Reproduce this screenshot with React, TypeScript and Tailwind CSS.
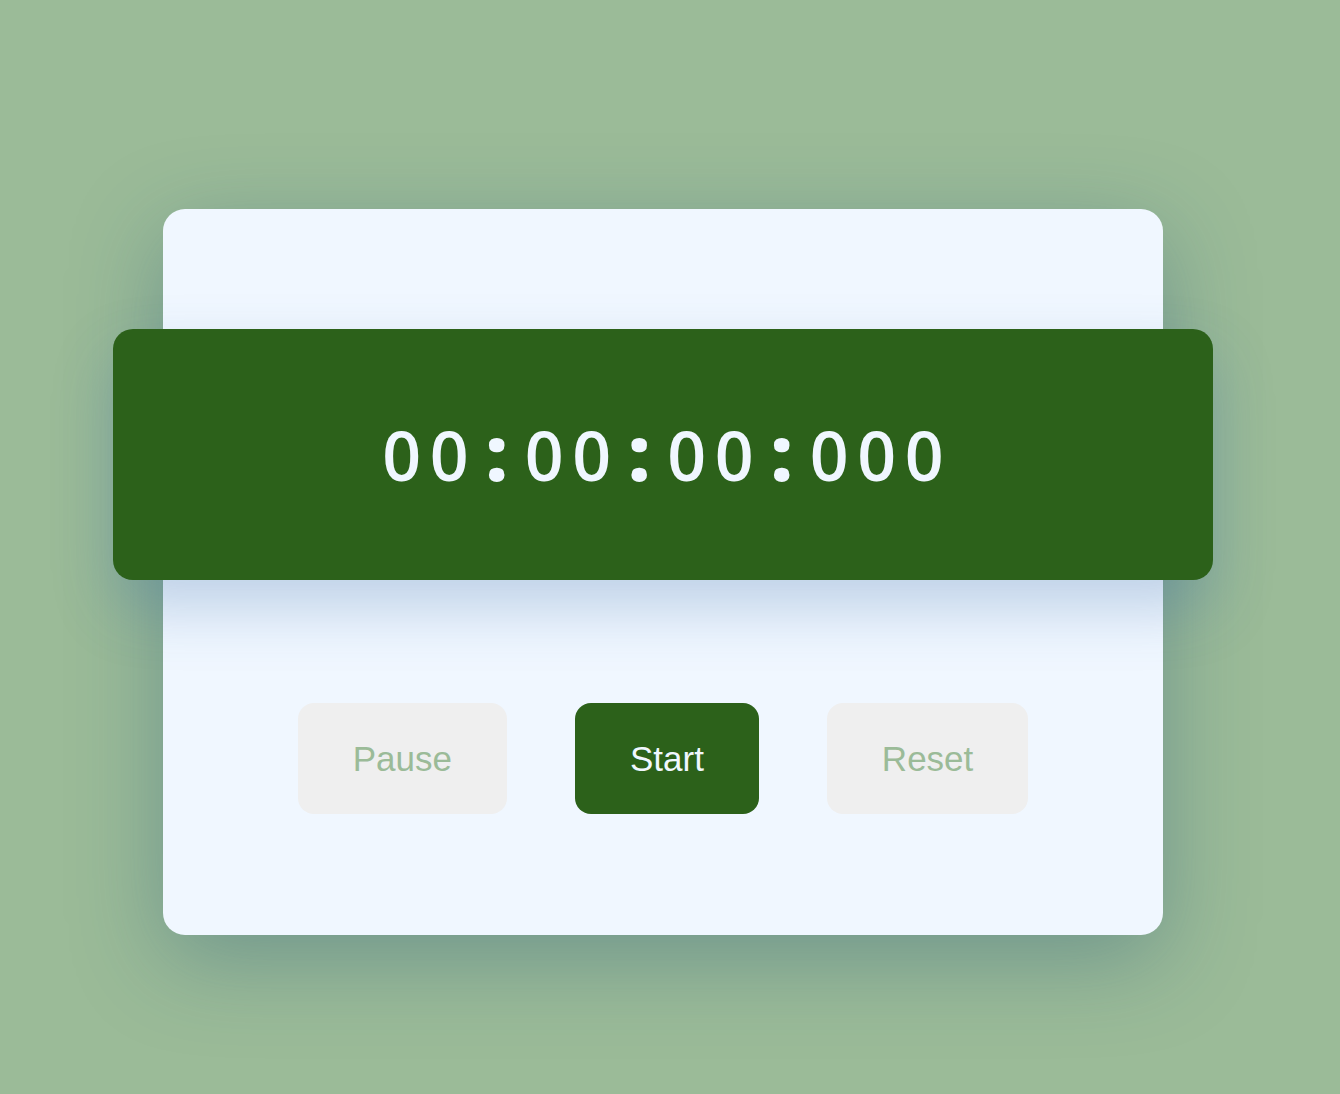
import React from 'react';

const buttons = [
  { label: 'Pause', primary: false },
  { label: 'Start', primary: true },
  { label: 'Reset', primary: false },
];

const App: React.FC = () => {
  const time = '00:00:00:000';

  return (
    <main className="min-h-screen w-full bg-[#9bbb98] pt-[209px] pl-[163px]">
      <section className="w-[1000px] h-[726px] bg-[#f0f7ff] rounded-[22px] pt-[120px] shadow-[0_24px_90px_rgba(40,90,120,0.38)]">
        <div className="-mx-[50px] h-[251px] bg-[#2c611a] rounded-[20px] flex items-center justify-center shadow-[0_28px_60px_rgba(60,110,170,0.28)]">
          <div className="flex items-center text-[#f0f7ff] text-[68px] leading-none font-semibold" style={{ fontFamily: '"Open Sans", sans-serif' }}>
            {time.split('').map((ch, i) =>
              ch === ':' ? (
                <span key={i} className="w-[47.5px] text-center font-extrabold text-[76px] -mt-[6px]">:</span>
              ) : (
                <span key={i} className="w-[47.5px] text-center">{ch}</span>
              )
            )}
          </div>
        </div>

        <div className="mt-[123px] flex justify-center gap-[68px]">
          {buttons.map((b) => (
            <button
              key={b.label}
              className={
                b.primary
                  ? 'h-[111px] px-[55px] rounded-[16px] bg-[#2c611a] text-[#f0f7ff] text-[35px] pt-[2px] font-["Liberation_Sans",Arial,sans-serif]'
                  : 'h-[111px] px-[55px] rounded-[16px] bg-[#efefef] text-[#9bbb98] text-[35px] pt-[2px] font-["Liberation_Sans",Arial,sans-serif]'
              }
            >
              {b.label}
            </button>
          ))}
        </div>
      </section>
    </main>
  );
};

export default App;
